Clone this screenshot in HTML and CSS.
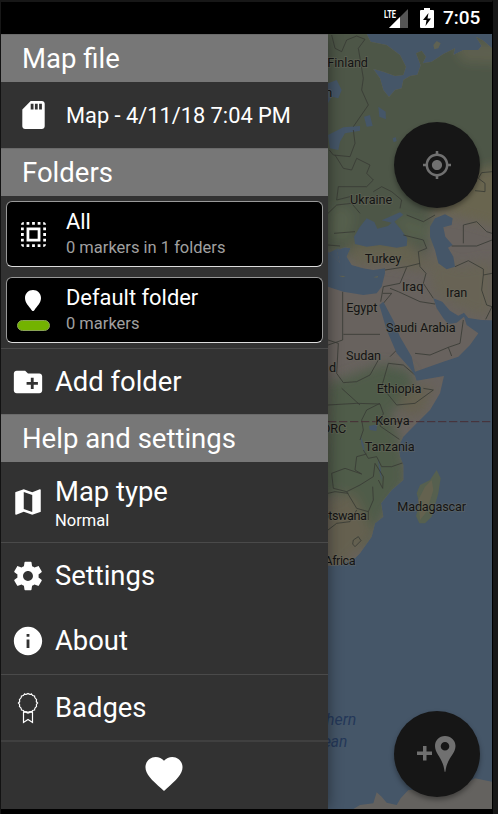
FILE: index.html
```html
<!DOCTYPE html>
<html lang="en">
<head>
<meta charset="utf-8">
<title>Map markers</title>
<link rel="stylesheet" href="styles.css">
</head>
<body>
<div class="screen">
  <header class="status">
    <svg class="signal" viewBox="0 0 26 22"><path d="M24 2v19H5z" fill="#555"/><path d="M16 10v11H5z" fill="#fff"/><text x="0" y="10.5" textLength="12" lengthAdjust="spacingAndGlyphs">LTE</text></svg>
    <svg class="battery" viewBox="0 0 14 20"><path d="M4 0h6v2h3q1 0 1 1v16q0 1-1 1H1q-1 0-1-1V3q0-1 1-1h3z" fill="#fff"/><path d="M8.500 5 3 12h3.500L5.500 18 11 10.500H7.500z" fill="#000"/></svg>
    <span class="time">7:05</span>
  </header>
  <div class="content">
    <nav class="drawer">
      <h2 class="section">Map file</h2>
      <div class="row file">
        <svg class="file-icon" viewBox="4 2 16 20"><path d="M18 2h-8L4.020 8 4 20c0 1.100.9 2 2 2h12c1.100 0 2-.9 2-2V4c0-1.100-.9-2-2-2zm-6 6h-2V4h2v4zm3 0h-2V4h2v4zm3 0h-2V4h2v4z"/></svg>
        <span>Map - 4/11/18 7:04 PM</span>
      </div>
      <h2 class="section">Folders</h2>
      <div class="cards">
        <div class="card">
          <div class="card-icon"><svg class="all-icon" viewBox="3 3 18 18"><path d="M3 5h2V3c-1.100 0-2 .9-2 2zm0 8h2v-2H3v2zm4 8h2v-2H7v2zM3 9h2V7H3v2zm10-6h-2v2h2V3zm6 0v2h2c0-1.100-.9-2-2-2zM5 21v-2H3c0 1.100.9 2 2 2zm-2-4h2v-2H3v2zM9 3H7v2h2V3zm2 18h2v-2h-2v2zm8-8h2v-2h-2v2zm0 8c1.100 0 2-.9 2-2h-2v2zm0-12h2V7h-2v2zm0 8h2v-2h-2v2zm-4 4h2v-2h-2v2zm0-16h2V3h-2v2zM7 17h10V7H7v10zm2-8h6v6H9V9z"/></svg></div>
          <div><p class="card-title">All</p><p class="card-sub">0 markers in 1 folders</p></div>
        </div>
        <div class="card">
          <div class="card-icon"><svg class="drop-icon" viewBox="0 0 16 21"><path d="M8 0C3.500 0 0 3.500 0 8c0 5 4 8 6.500 12 1 1.400 2 1.400 3 0C12 16 16 13 16 8c0-4.500-3.500-8-8-8z"/></svg><i class="swatch"></i></div>
          <div><p class="card-title">Default folder</p><p class="card-sub">0 markers</p></div>
        </div>
      </div>
      <div class="row action ruled-top">
        <svg class="icon" viewBox="0 0 24 24"><path d="M20 6h-8l-2-2H4c-1.110 0-1.990.89-1.990 2L2 18c0 1.110.89 2 2 2h16c1.110 0 2-.89 2-2V8c0-1.110-.89-2-2-2zm-1 8h-3v3h-2v-3h-3v-2h3V9h2v3h3v2z"/></svg>
        <span>Add folder</span>
      </div>
      <h2 class="section">Help and settings</h2>
      <div class="row action type">
        <svg class="icon" viewBox="0 0 24 24"><path d="M20.500 3l-.16.030L15 5.100 9 3 3.360 4.900c-.21.070-.36.250-.36.480V20.500c0 .28.22.5.5.5l.16-.03L9 18.900l6 2.100 5.640-1.900c.21-.07.36-.25.36-.48V3.500c0-.28-.22-.5-.5-.5zM15 19l-6-2.110V5l6 2.110V19z"/></svg>
        <div><p class="type-title">Map type</p><p class="type-sub">Normal</p></div>
      </div>
      <div class="row action ruled-top settings">
        <svg class="icon" viewBox="0 0 24 24"><path d="M19.430 12.980c.04-.32.070-.64.070-.98s-.03-.66-.07-.98l2.110-1.650c.19-.15.24-.42.120-.64l-2-3.460c-.12-.22-.39-.3-.61-.22l-2.490 1c-.52-.4-1.080-.73-1.690-.98l-.38-2.650C14.460 2.180 14.250 2 14 2h-4c-.25 0-.46.180-.49.420l-.38 2.650c-.61.250-1.170.590-1.690.980l-2.490-1c-.23-.09-.49 0-.61.220l-2 3.460c-.13.220-.07.490.12.640l2.110 1.650c-.04.320-.07.650-.07.980s.03.660.07.980l-2.110 1.650c-.19.150-.24.420-.12.640l2 3.460c.12.220.39.300.61.220l2.490-1c.52.400 1.080.730 1.690.980l.38 2.650c.03.240.24.420.49.420h4c.25 0 .46-.18.49-.42l.38-2.650c.61-.25 1.170-.59 1.690-.98l2.490 1c.23.090.49 0 .61-.22l2-3.460c.12-.22.070-.49-.12-.64l-2.110-1.650zM12 15.500c-1.930 0-3.500-1.570-3.500-3.500s1.570-3.500 3.500-3.500 3.500 1.570 3.500 3.500-1.570 3.500-3.500 3.500z"/></svg>
        <span>Settings</span>
      </div>
      <div class="row action">
        <svg class="icon" viewBox="0 0 24 24"><path d="M12 2C6.480 2 2 6.480 2 12s4.480 10 10 10 10-4.480 10-10S17.520 2 12 2zm1 15h-2v-6h2v6zm0-8h-2V7h2v2z"/></svg>
        <span>About</span>
      </div>
      <div class="row action ruled-top">
        <svg class="icon outline" viewBox="0 0 34 34"><path d="M17 2.500Q19 4 20.500 3 21.500 5.200 23.500 5 23.500 7.300 25.500 8.500 24.700 10.500 26.500 12 24.700 13.500 25.500 15.500 23.500 16.700 23.500 19 21.500 18.800 20.500 21 19 20 17 21.500 15 20 13.500 21 12.500 18.800 10.500 19 10.500 16.700 8.500 15.500 9.300 13.500 7.500 12 9.300 10.500 8.500 8.500 10.500 7.300 10.500 5 12.500 5.200 13.500 3 15 4 17 2.500Z"/><path d="M12.500 20.500v11l4.500-3 4.500 3v-11M12.500 20.500l4.500 1.500 4.500-1.500"/></svg>
        <span>Badges</span>
      </div>
      <div class="row heart">
        <svg class="heart-icon" viewBox="2 3 20 18.350"><path d="M12 21.350l-1.450-1.320C5.400 15.360 2 12.280 2 8.500 2 5.420 4.420 3 7.500 3c1.740 0 3.410.81 4.500 2.090C13.090 3.810 14.760 3 16.500 3 19.580 3 22 5.420 22 8.500c0 3.780-3.400 6.860-8.550 11.540L12 21.350z"/></svg>
      </div>
    </nav>
    <main class="map">
      <svg class="map-art" viewBox="24 102 492 2325">
        <defs>
          <filter id="soft" x="-30%" y="-30%" width="160%" height="160%"><feGaussianBlur stdDeviation="17"/></filter>
          <clipPath id="land"><path id="coast" d="M24 102H140L152 125 200 135 240 165 258 200 250 225 225 228 190 215 160 207 180 235 190 270 207 291 225 270 245 265 250 240 270 228 292 224 302 196 288 160 305 152 318 170 308 190 335 185 370 162 405 145 400 165 430 150 475 150 485 138 468 110 490 122 516 145V961L485 960 445 954 432 938 415 947 390 932 367 905 340 895 350 925 370 955 385 972 410 968 432 950 440 975 475 1000 450 1035 415 1070 370 1085 285 1115 275 1070 240 1010 222 965 190 905 178 915 200 990 230 1060 270 1105 285 1128 290 1142 372 1128 360 1180 330 1230 290 1270 250 1310 235 1340 240 1370 250 1395 250 1440 215 1470 183 1510 190 1550 165 1570 155 1610 120 1660 105 1675 60 1695 24 1697V860L70 875 130 885 170 880 185 860 195 820 195 805 160 810 130 805 95 795 80 770 92 745 75 742 50 750 60 790 24 755Z"/></clipPath>
        </defs>
        <path class="sea" d="M24 102h492v2325H24z"/>
        <use href="#coast" fill="#68625e"/>
        <g clip-path="url(#land)">
          <g filter="url(#soft)">
            <path d="M-40 40H580V500L430 540 340 640 320 770 260 720 120 770 -20 750Z" fill="#4d5647"/>
            <path d="M440 520 560 490V690L420 650 320 640 370 590Z" fill="#69654f"/>
            <path d="M400 130h150v60l-120-5z" fill="#5f604f"/>
            <path d="M90 730 260 720 330 800 300 810 200 790 100 800Z" fill="#65624f"/>
            <path d="M320 760 420 800 516 780V950L450 940 340 880Z" fill="#686354"/>
            <path d="M24 1150 190 1090 250 1110 290 1170 210 1240 240 1320 260 1440 190 1550 140 1660 90 1560 60 1480 0 1490Z" fill="#505b49"/>
            <path d="M20 1500 100 1480 160 1600 70 1700H20ZM240 1180 340 1150 310 1240 250 1250Z" fill="#65604f"/>
            <path d="M220 640 340 680 330 730 250 700ZM40 610 100 640 80 720 24 710Z" fill="#56614e"/>
            <path d="M200 1100 270 1110 280 1160 210 1180Z" fill="#4d5b4a"/>
          </g>
          <g class="water"><path d="M24 250 50 240 65 270 55 295 35 290 24 310ZM24 405 70 382 120 378 120 392 75 400 60 425 55 450 30 445ZM132 350 150 345 158 378 140 380ZM175 320 197 335 198 358 178 350ZM218 415l9-4 3 12-9 4Z"/><path d="M105 732 102 710 120 680 140 655 163 666 172 686 204 678 215 668 185 661 240 637 250 644 223 665 240 685 262 715 260 738 230 743 180 735 140 740ZM330 680 345 655 375 643 398 655 395 675 370 682 376 710 398 735 384 743 400 770 405 800 380 808 355 790 345 750 330 710ZM147 1278l25-5-3 20-20-3ZM120 1305l5 30 10 28-4-30ZM174 1375l8 30 4 40-8-30Z"/></g>
          <path class="sea" d="M24 760 55 745 70 770 80 790 70 820 24 805Z"/>
          <path class="borders" d="M35 105 45 145 65 155 80 120 110 108 135 118 115 145 130 235 125 270 145 315 100 380M100 390 105 430 90 470 40 465 28 450M45 465 70 505 95 510 110 475 150 495 140 520 160 540 140 560 55 560 50 600 90 590M160 575 185 560 215 575 245 600 240 625M516 515 485 518 475 535 495 550 495 575 465 572M24 640 50 615 95 610 120 640M42 700 105 695M24 735 60 738M260 645 310 665 345 645M250 705 310 720 320 745 295 755 300 800 318 820 310 850 340 895M430 730V675L470 665 500 695 516 700M395 738H470L516 720M405 800 445 782 490 807 490 825 516 820M490 825 485 870 500 915 516 920 497 958M195 810 260 800 300 790M260 802 240 850 190 860 182 905M210 865 235 875 300 905 345 912M188 880 215 880 190 910M68 875V1020L24 1035M70 1003H180M24 1020 55 1030 50 1120 70 1148 110 1145 150 1125 175 1080M210 1070 230 1050M205 1090 250 1095 285 1125M205 1090 185 1160 230 1215 285 1210 340 1170 310 1165M285 1060 330 1065 385 1042 420 1030 430 960M385 1042 395 1068M24 1215 110 1210 180 1212 190 1240 180 1278 238 1318M65 1165 120 1215M180 1210 140 1230 125 1260 130 1290 120 1320M130 1350 145 1375 170 1370 185 1400 215 1400 250 1388M140 1362 110 1370 105 1410 125 1422 75 1405 35 1420 40 1465 80 1475 120 1455 160 1430 165 1390 190 1430 188 1465 175 1440M80 1475 110 1525 145 1535 160 1500 158 1460M24 1480 45 1475 85 1480M24 1590 50 1570 90 1565 110 1530M145 1535 145 1560M100 1620l15-10 8 12-18 18-7-8Z"/>
        </g>
        <path d="M350 1410 362 1435 355 1480 335 1550 315 1570 298 1570 288 1548 298 1510 290 1480 300 1455 330 1440Z" fill="#56604f"/>
        <path d="M315 1460 335 1440 340 1470 320 1535 300 1560 295 1500Z" fill="#64624f"/>
        <path d="M340 135l10-12 12 7-7 15-12 3ZM160 832l15-5-3 6ZM55 827l22 1-8 4Z" fill="#5f6253"/>
        <path d="M100 2427 120 2415 160 2410 170 2377 185 2390 200 2408 230 2415 242 2395 265 2370 420 2360 465 2335 516 2345V2427Z" fill="#64625f"/>
        <path class="equator" d="M24 1265H516"/>
        <g class="labels">
          <text x="22" y="202" textLength="122">Finland</text><text x="16" y="290">n</text><text x="90" y="612" textLength="127">Ukraine</text><text x="134" y="788" textLength="110">Turkey</text><text x="246" y="873" textLength="64">Iraq</text><text x="378" y="892" textLength="64">Iran</text><text x="79" y="936" textLength="93">Egypt</text><text x="198" y="997" textLength="209">Saudi Arabia</text><text x="78" y="1079" textLength="105">Sudan</text><text x="27" y="1115">d</text><text x="170" y="1179" textLength="134">Ethiopia</text><text x="166" y="1274" textLength="103">Kenya</text><text x="6" y="1298" textLength="73">DRC</text><text x="134" y="1353" textLength="150">Tanzania</text><text x="232" y="1534" textLength="206">Madagascar</text><text x="-18" y="1559" textLength="159">Botswana</text><text x="13" y="1694" textLength="94">Africa</text>
        </g>
        <g class="ocean"><text x="-76" y="2175" textLength="185" lengthAdjust="spacingAndGlyphs">Southern</text><text x="-46" y="2241" textLength="128" lengthAdjust="spacingAndGlyphs">Ocean</text></g>
      </svg>
      <div class="fab locate"><svg viewBox="1 1 22 22"><path d="M12 8c-2.210 0-4 1.790-4 4s1.790 4 4 4 4-1.790 4-4-1.790-4-4-4zm8.940 3c-.46-4.170-3.770-7.480-7.940-7.940V1h-2v2.060C6.830 3.520 3.520 6.830 3.060 11H1v2h2.060c.46 4.170 3.770 7.480 7.940 7.940V23h2v-2.060c4.170-.46 7.480-3.770 7.940-7.940H23v-2h-2.060zM12 19c-3.870 0-7-3.130-7-7s3.130-7 7-7 7 3.130 7 7-3.130 7-7 7z"/></svg></div>
      <div class="fab add"><svg viewBox="0 0 39 37"><path d="M6 10h3.500v5.500H15V19H9.500v5.500H6V19H0v-3.500h6zM28 0c-6 0-10 4.500-10 10 0 8 8 12 9.500 25 .1 1.300.9 1.300 1 0C30 22 38.500 18 38.500 10 38.500 4.500 34 0 28 0zm0 6a4.300 4.300 0 1 1 0 8.600 4.300 4.300 0 0 1 0-8.600z"/></svg></div>
    </main>
  </div>
</div>
</body>
</html>
```
FILE: styles.css
```css
* { box-sizing: border-box; }
body { margin: 0; background: #171717; font-family: Roboto, "Liberation Sans", sans-serif; color: #fff; }
h2, p { margin: 0; font-weight: 400; }
svg { display: block; flex: none; fill: #fff; }
.screen { width: 492px; height: 814px; margin-left: 1px; border-top: 2px solid #171717; border-right: 1px solid #000; background: #000; }
.status { height: 32px; display: flex; align-items: center; justify-content: flex-end; padding-right: 11px; }
.signal { width: 26px; height: 22px; margin-right: 10px; }
.signal text { font: 700 10.500px Roboto, sans-serif; }
.battery { width: 14px; height: 20px; margin-right: 9px; }
.time { width: 38px; font-size: 19px; font-weight: 500; line-height: 34px; white-space: nowrap; }
.content { display: flex; height: 775px; }
.drawer { position: relative; z-index: 1; width: 327px; background: #323232; box-shadow: 0 0 14px rgba(0, 0, 0, .45); }
.section { height: 48px; padding-left: 21px; background: #777; font-size: 27.500px; line-height: 50px; box-shadow: inset 0 1px #6a6a6a; }
.row { display: flex; align-items: center; }
.file { height: 66px; padding-left: 21px; gap: 21px; font-size: 21.800px; }
.file-icon { width: 23px; height: 28px; }
.cards { height: 152px; padding: 5px 5px 0; display: flex; flex-direction: column; gap: 10px; }
.card { height: 66px; display: flex; align-items: center; border: 1px solid #999; border-bottom-color: #ddd; border-radius: 6px; background: #000; }
.card-icon { width: 59px; padding-right: 7px; display: flex; flex-direction: column; align-items: center; gap: 9px; }
.all-icon { width: 25px; height: 25px; }
.drop-icon { width: 16px; height: 21px; }
.swatch { width: 33px; height: 11px; border: 1px solid #8aa456; border-radius: 6px; background: #73b300; }
.card-title { font-size: 21.900px; line-height: 26px; }
.card-sub { color: #a0a0a0; font-size: 16.500px; line-height: 25px; }
.action { height: 66px; padding-left: 10px; gap: 10px; font-size: 27.400px; }
.icon { width: 34px; height: 34px; }
.outline { fill: none; stroke: #fff; stroke-width: 1.200; }
.ruled-top { border-top: 1px solid #4a4a4a; }
.type { height: 80px; }
.type-title { font-size: 27.400px; line-height: 34px; padding-top: 3px; }
.type-sub { font-size: 16.500px; line-height: 24px; }
.heart { height: 68px; justify-content: center; border-top: 2px solid #404040; }
.heart-icon { width: 38px; height: 34px; margin: 0 2px 2px 0; }
.map { position: relative; width: 164px; }
.map-art { width: 164px; height: 775px; }
.sea, .water { fill: #455668; }
.borders { fill: none; stroke: #383b35; stroke-width: 2.500; stroke-linejoin: round; }
.equator { fill: none; stroke: #462f36; stroke-width: 3; stroke-dasharray: 25 8; }
.labels { fill: #141414; stroke: rgba(112, 110, 98, .45); stroke-width: 5; paint-order: stroke; font-size: 38px; }
.ocean { fill: #243859; font-size: 52px; font-style: italic; }
.fab { position: absolute; left: 66px; width: 86px; height: 86px; border-radius: 50%; display: flex; align-items: center; justify-content: center; background: #161616; box-shadow: 0 3px 5px rgba(0, 0, 0, .35); }
.fab svg { fill: #707070; }
.locate { top: 88px; }
.locate svg { width: 28px; height: 28px; }
.add { top: 677px; }
.add svg { width: 39px; height: 37px; margin-right: 2px; }
```
